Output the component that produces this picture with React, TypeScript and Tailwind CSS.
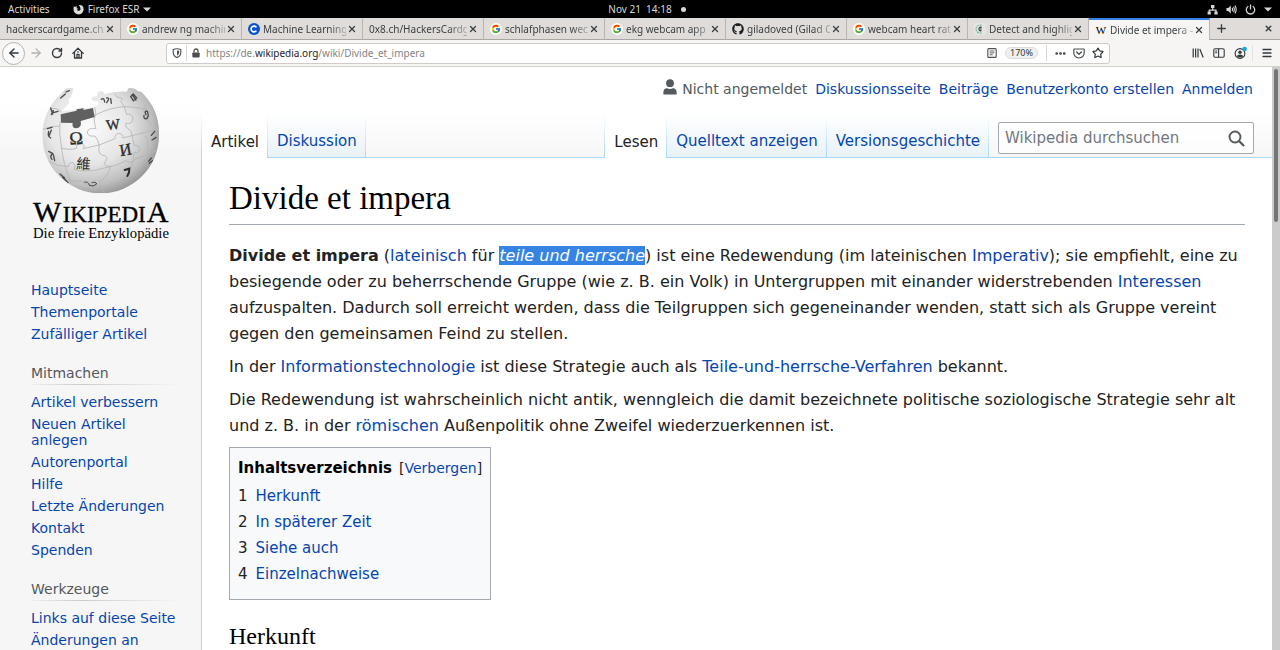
import React from "react";
import {
  ArrowLeft,
  ArrowRight,
  Ellipsis,
  Menu,
  Plus,
  RotateCw,
  Star,
  X,
} from "lucide-react";
import { FaGithub } from "react-icons/fa";
import { FcGoogle } from "react-icons/fc";

const link = "text-[#0645ad] hover:underline";

function PuzzleGlobe() {
  const glyph = { fontFamily: "Liberation Serif, serif", fill: "#2c2c2c" };
  return (
    <svg
      viewBox="90 54 426 480"
      className="h-[160px] w-[142px]"
      role="img"
      aria-label="Wikipedia – Die freie Enzyklopädie"
    >
      <defs>
        <radialGradient id="globe" cx="0.4" cy="0.38" r="0.66">
          <stop offset="0" stopColor="#fbfbfb" />
          <stop offset="0.5" stopColor="#e6e6e6" />
          <stop offset="0.8" stopColor="#bdbdbd" />
          <stop offset="1" stopColor="#868686" />
        </radialGradient>
        <clipPath id="globeClip">
          <path d="M197 69 Q209 62 220 68 L214 92 Q204 96 207 112 L186 136 L282 122 Q300 118 293 106 Q276 108 274 98 Q277 90 292 91 Q289 79 300 76 Q312 74 313 84 Q346 74 380 77 L386 66 Q404 64 412 74 L424 78 A172 172 0 0 1 477 208 A175 174 0 0 1 302 382 A175 174 0 0 1 127 208 A172 172 0 0 1 180 86 Z" />
        </clipPath>
      </defs>
      <g clipPath="url(#globeClip)">
        <rect x="120" y="56" width="365" height="335" fill="url(#globe)" />
        <g fill="none" stroke="#b4b4b4" strokeWidth="2.5">
          <path d="M180 165 Q176 200 184 240 Q190 300 214 352" />
          <path d="M282 155 Q284 180 288 188 Q266 184 262 198 Q262 213 285 210 Q295 222 298 240 Q292 262 308 268 Q330 270 314 290 Q312 304 332 300 Q326 330 300 346 Q296 356 314 380" />
          <path d="M345 84 Q348 96 360 94 Q372 98 362 106 Q376 120 380 146 Q396 140 399 158 Q396 176 378 172 Q372 182 392 194 Q400 220 402 238 Q418 236 420 252 Q414 264 402 260 Q400 300 376 340" />
          <path d="M182 246 Q215 254 230 246 Q226 232 244 232 Q256 236 250 248 Q300 240 345 218 Q344 204 356 202 Q372 204 368 216 Q420 204 474 188" />
          <path d="M128 190 Q150 180 180 180 M284 148 Q330 124 374 122 Q420 124 446 132 M284 122 Q290 140 284 156" />
          <path d="M146 286 Q175 302 205 302 Q206 288 220 290 Q230 300 222 310 Q265 322 312 306 Q352 300 376 284 Q400 296 404 280 Q440 268 468 254" />
          <path d="M180 332 Q210 350 242 344 Q262 362 310 360 Q350 350 380 334" />
          <path d="M150 130 Q168 122 184 138 M440 112 Q422 132 442 150 Q440 170 456 178 M436 210 Q450 236 438 262" />
        </g>
        <path
          d="M182 145 L230 134 Q226 120 241 119 Q255 121 250 132 L279 126 L284 153 L242 165 Q246 184 230 187 Q214 187 218 171 L183 170 Z"
          fill="#606060"
        />
        <g style={glyph}>
          <text x="208" y="235" fontSize="55" stroke="#2c2c2c" transform="rotate(-4 228 217)">Ω</text>
          <text x="318" y="190" fontSize="44" stroke="#2c2c2c" transform="rotate(-7 340 174)">W</text>
          <text x="358" y="268" fontSize="50" stroke="#2c2c2c" transform="rotate(-10 376 250)">И</text>
          <text
            x="229"
            y="309"
            fontSize="43"
            transform="rotate(4 250 294)"
            style={{ fontFamily: "Noto Sans CJK TC, sans-serif" }}
          >
            維
          </text>
        </g>
        <g fill="none" stroke="#4a4a4a" strokeWidth="4" strokeLinecap="round">
          <path d="M304 100 Q312 93 314 108 M320 96 Q332 94 320 110 M332 98 L334 112" />
          <path d="M374 312 L388 308 Q389 320 382 330" strokeWidth="6" stroke="#2c2c2c" />
          <path d="M432 148 Q430 160 440 158 Q448 150 442 136 Q432 134 438 146" />
          <path d="M392 92 L400 84 L410 96 L400 104 Z M396 86 L408 102" />
          <path d="M152 126 L158 144 M160 140 L174 136 M154 146 L160 134" />
          <path d="M142 188 L156 184 M146 196 Q142 210 152 216 M154 192 L148 208" />
          <path d="M146 256 L158 262 Q148 272 156 280 M160 266 L164 284" />
          <path d="M180 324 L194 336 M188 334 L204 350 M182 96 L196 84 M198 78 L208 74" />
          <path d="M254 348 Q266 346 268 358 Q280 364 290 354 Q288 346 276 350" strokeWidth="3" />
          <path d="M454 208 L464 196 M456 222 L468 214 M446 286 L454 276 M448 292 L458 284" />
        </g>
      </g>
      <g style={{ fontFamily: "Liberation Serif, serif" }} fill="#000" stroke="#000">
        <text x="99" y="467" fontSize="90" strokeWidth="1">
          W
        </text>
        <text x="188" y="467" fontSize="69" strokeWidth="1">
          IKIPEDI
        </text>
        <text x="440" y="467" fontSize="90" strokeWidth="1">
          A
        </text>
        <text x="99" y="515" fontSize="44" strokeWidth="0">
          Die freie Enzyklopädie
        </text>
      </g>
    </svg>
  );
}

function CourseraIcon() {
  return (
    <svg viewBox="0 0 12 12" className="size-3 shrink-0" aria-hidden="true">
      <circle cx="6" cy="6" r="6" fill="#0b53ce" />
      <path d="M8.4 7.6 A2.9 2.9 0 1 1 8.4 4.4" fill="none" stroke="#fff" strokeWidth="1.7" />
    </svg>
  );
}

function SpiralIcon() {
  return (
    <svg viewBox="0 0 12 12" className="size-3 shrink-0" aria-hidden="true">
      <rect width="12" height="12" rx="2" fill="#e6e4e2" />
      <path d="M7.6 2.4 A4 4 0 1 0 7.6 9.8" fill="none" stroke="#7dbba3" strokeWidth="1.2" strokeDasharray="2 0.6" />
      <path d="M7.6 4.5 A1.8 1.8 0 1 0 7.6 7.6 M6 6 H7.6" fill="none" stroke="#333" strokeWidth="1.1" />
    </svg>
  );
}

type Tab = { title: string; icon?: "google" | "coursera" | "github" | "spiral" | "wiki"; active?: boolean };

const tabs: Tab[] = [
  { title: "hackerscardgame.ch/" },
  { title: "andrew ng machin", icon: "google" },
  { title: "Machine Learning", icon: "coursera" },
  { title: "0x8.ch/HackersCardg" },
  { title: "schlafphasen weck", icon: "google" },
  { title: "ekg webcam app g", icon: "google" },
  { title: "giladoved (Gilad O", icon: "github" },
  { title: "webcam heart rate", icon: "google" },
  { title: "Detect and highlig", icon: "spiral" },
  { title: "Divide et impera –", icon: "wiki", active: true },
];

function TabIcon({ icon }: { icon: Tab["icon"] }) {
  if (icon === "google")
    return (
      <span className="flex size-3 shrink-0 items-center justify-center rounded-full bg-white">
        <FcGoogle className="size-[10px]" />
      </span>
    );
  if (icon === "coursera") return <CourseraIcon />;
  if (icon === "github") return <FaGithub className="size-3 shrink-0 text-[#1b1f23]" />;
  if (icon === "spiral") return <SpiralIcon />;
  if (icon === "wiki")
    return <span className="w-3 shrink-0 text-center font-['Liberation_Serif',serif] text-[11px] text-black">W</span>;
  return null;
}

function BrowserTab({ tab }: { tab: Tab }) {
  return (
    <div
      className={
        "flex min-w-0 flex-1 items-center border-r border-[#b9b5b1] pl-[6px] pr-1 " +
        (tab.active ? "border-t-2 border-t-[#3584e4] bg-[#f6f5f4] pb-px" : "border-b border-b-[#a9a5a1] bg-[#dfdcd9] pt-px")
      }
    >
      <div className="flex min-w-0 flex-1 items-center gap-[3px]">
        <TabIcon icon={tab.icon} />
        <span className="min-w-0 flex-1 overflow-hidden whitespace-nowrap [mask-image:linear-gradient(to_right,black_80%,#0004)]">
          {tab.title}
        </span>
      </div>
      <button type="button" aria-label={"Close " + tab.title} className="flex size-3 shrink-0 items-center justify-center">
        <X className="size-[10px]" strokeWidth={3} />
      </button>
    </div>
  );
}

function DesktopBar() {
  return (
    <div className="grid h-[18px] shrink-0 grid-cols-[1fr_auto_1fr] items-center bg-black px-2 font-['Noto_Sans',sans-serif] text-[10px] leading-4 text-[#d8d8d8]">
      <div className="flex items-center gap-[23px]">
        <button type="button">Activities</button>
        <button type="button" className="flex items-center gap-1">
          <svg viewBox="0 0 12 12" className="size-[11px]" aria-hidden="true">
            <path
              d="M1 2.4 Q1.6 3 2.4 3 Q3.4 2.4 4.6 2.8 Q3.6 3.6 4 4.6 L5.6 5.2 Q5.2 6.4 4 6.4 Q5.4 8 7.2 7.2 Q8.8 6 8 4 Q7.6 2.6 6.2 1.6 Q8 0.6 9.6 2 Q9.6 1.4 9.2 0.8 Q12 3 11.6 6.4 Q11 11 6.2 11.4 Q1.2 11.2 0.6 6.4 Q0.4 4 1 2.4Z"
              fill="#dcdcdc"
            />
          </svg>
          Firefox ESR
          <svg viewBox="0 0 8 5" className="h-[5px] w-2" aria-hidden="true">
            <path d="M0 0.5H8L4 4.5Z" fill="#d8d8d8" />
          </svg>
        </button>
      </div>
      <div className="flex items-center gap-[9px] pl-[14px]">
        <span className="whitespace-pre">Nov 21  14:18</span>
        <span className="size-[5px] rounded-full bg-[#d8d8d8]" />
      </div>
      <div className="flex items-center justify-end gap-2">
        <svg viewBox="0 0 11 11" className="size-[11px]" fill="#d8d8d8" aria-label="Network">
          <path d="M4 1h3.4v3H6.3v1.6H9.6V7.6H10.6V10.4H7.4V7.6H8.4V6.7H2.8V7.6H3.8V10.4H0.6V7.6H1.6V5.6H5.1V4H4Z" />
        </svg>
        <svg viewBox="0 0 12 12" className="size-[11px]" fill="none" stroke="#d8d8d8" strokeWidth="1.2" aria-label="Volume">
          <path d="M0.5 4.3H2.5L5.2 1.6V10.4L2.5 7.7H0.5Z" fill="#d8d8d8" stroke="none" />
          <path d="M6.6 4.2Q7.8 6 6.6 7.8M8.2 3Q10 6 8.2 9M9.8 1.8Q12.4 6 9.8 10.2" />
        </svg>
        <svg viewBox="0 0 12 12" className="size-[11px]" fill="none" stroke="#d8d8d8" strokeWidth="1.4" aria-label="Power">
          <path d="M3.6 2.4A4.6 4.6 0 1 0 8.4 2.4M6 0.6V6" />
        </svg>
        <svg viewBox="0 0 8 5" className="h-[5px] w-2" aria-hidden="true">
          <path d="M0 0.5H8L4 4.5Z" fill="#d8d8d8" />
        </svg>
      </div>
    </div>
  );
}

function TabStrip() {
  return (
    <div className="flex h-[22px] shrink-0 bg-[#dfdcd9] font-['Noto_Sans',sans-serif] text-[10px] leading-4 text-[#3a3f42]">
      {tabs.map((t) => (
        <BrowserTab key={t.title} tab={t} />
      ))}
      <div className="flex w-[70px] items-center justify-between border-b border-[#a9a5a1] pl-[5px] pr-[7px]">
        <button type="button" aria-label="New tab">
          <Plus className="size-[13px]" strokeWidth={2.5} />
        </button>
        <button type="button" aria-label="Close window">
          <X className="size-[9px]" strokeWidth={4} />
        </button>
      </div>
    </div>
  );
}

function NavBar() {
  return (
    <div className="flex h-[27px] shrink-0 items-center border-b border-[#d5d1cd] bg-[#f6f5f4] pl-[2px] pr-[7px] font-['Noto_Sans',sans-serif] text-[10px] text-[#33393b]">
      <button type="button" aria-label="Back" className="flex size-[23px] items-center justify-center rounded-full border border-[#b5b2af] bg-[#fbfafa]">
        <ArrowLeft className="size-[14px]" strokeWidth={2.4} />
      </button>
      <button type="button" aria-label="Forward" className="ml-1 text-[#b0b0b0]">
        <ArrowRight className="size-[14px]" strokeWidth={2.2} />
      </button>
      <button type="button" aria-label="Reload" className="ml-2">
        <RotateCw className="size-3" strokeWidth={2.8} />
      </button>
      <button type="button" aria-label="Home" className="ml-[9px]">
        <svg viewBox="0 0 12 12" className="size-3" fill="none" stroke="#33393b" strokeWidth="1.3" strokeLinejoin="round" strokeLinecap="round">
          <path d="M0.8 6.4L6 1.2L11.2 6.4M2.5 5.5V11H9.5V5.5M5 10.8V7.4H7V10.8M6 4.6V5.2" />
        </svg>
      </button>
      <div className="ml-[82px] mr-[82px] flex h-[21px] min-w-0 flex-1 items-center rounded-[3px] border border-[#cfcbc8] bg-white pl-[5px] pr-1">
        <svg viewBox="0 0 10 10" className="size-[10px] shrink-0" fill="none" stroke="#4c4f51" strokeWidth="1.1" aria-hidden="true">
          <path d="M1.2 1.4Q5 0 8.8 1.4V4.6Q8.6 8 5 9.5Q1.4 8 1.2 4.6Z" />
          <path d="M5 2.4Q6.4 2.4 7.2 2.8V4.6Q7 6.6 5 7.8Z" fill="#4c4f51" stroke="none" />
        </svg>
        <span className="ml-1 h-4 w-px bg-[#d5d5d5]" />
        <svg viewBox="0 0 10 10" className="ml-1 size-[10px] shrink-0" aria-hidden="true">
          <path d="M3 4.6V3A2 2 0 0 1 7 3V4.6" fill="none" stroke="#4c4f51" strokeWidth="1.3" />
          <rect x="1.3" y="4.4" width="7.4" height="5" rx="0.8" fill="#4c4f51" />
        </svg>
        <div className="ml-[5px] min-w-0 flex-1 whitespace-nowrap text-[#858585]" role="textbox" aria-label="Address">
          https://de.<span className="text-[#1f2426]">wikipedia.org</span>/wiki/Divide_et_impera
        </div>
        <button type="button" aria-label="Reader view">
          <svg viewBox="0 0 10 10" className="size-[10px]" fill="none" stroke="#4c4f51" strokeWidth="1.1">
            <rect x="0.8" y="0.6" width="8.4" height="8.8" rx="1" />
            <path d="M2.6 3H7.4M2.6 4.9H7.4M2.6 6.8H5.6" strokeWidth="0.9" />
          </svg>
        </button>
        <button type="button" className="ml-2 h-3 w-[33px] rounded-full border border-[#dcdcdc] bg-[#f0f0f0] text-[9px] leading-[10px]">
          170%
        </button>
        <span className="ml-2 h-4 w-px bg-[#d5d5d5]" />
        <button type="button" aria-label="Page actions" className="ml-[7px]">
          <Ellipsis className="size-[13px]" strokeWidth={3} />
        </button>
        <button type="button" aria-label="Save to Pocket" className="ml-[6px]">
          <svg viewBox="0 0 12 11" className="h-[11px] w-3" fill="none" stroke="#4c4f51" strokeWidth="1.2" strokeLinecap="round" strokeLinejoin="round">
            <path d="M1.4 1H10.6Q11.2 1 11.2 1.6V4.8Q11 9.6 6 10Q1 9.6 0.8 4.8V1.6Q0.8 1 1.4 1Z" />
            <path d="M3.6 4L6 6.3L8.4 4" strokeWidth="1.4" />
          </svg>
        </button>
        <button type="button" aria-label="Bookmark" className="ml-[7px] mr-px">
          <Star className="size-3" strokeWidth={2.4} />
        </button>
      </div>
      <div className="flex items-center">
        <button type="button" aria-label="Library">
          <svg viewBox="0 0 12 10" className="h-[10px] w-3" fill="none" stroke="#33393b" strokeWidth="1.2">
            <path d="M1.2 0.5V9.5M3.6 0.5V9.5M6 0.5V9.5M7.8 1L11.2 9.4" />
          </svg>
        </button>
        <button type="button" aria-label="Sidebars" className="ml-[9px]">
          <svg viewBox="0 0 12 10" className="h-[10px] w-3" fill="none" stroke="#33393b" strokeWidth="1.1">
            <rect x="0.8" y="0.8" width="10.4" height="8.4" rx="1.2" />
            <path d="M5.6 0.8V9.2M2.2 3H4.2M2.2 4.8H4.2" />
          </svg>
        </button>
        <button type="button" aria-label="Account" className="ml-2">
          <svg viewBox="0 0 15 14" className="h-[14px] w-[15px]">
            <circle cx="7" cy="7.5" r="4.9" fill="none" stroke="#33393b" strokeWidth="1.1" />
            <circle cx="7" cy="6.2" r="1.7" fill="#33393b" />
            <path d="M3.8 10.2Q4.4 8.4 7 8.4Q9.6 8.4 10.2 10.2Q7 12.8 3.8 10.2Z" fill="#33393b" />
            <circle cx="11.6" cy="3" r="2.3" fill="#1ca4e8" />
          </svg>
        </button>
        <span className="ml-1 h-4 w-px bg-[#e4e1de]" />
        <button type="button" aria-label="Menu" className="ml-2">
          <Menu className="size-3" strokeWidth={2.6} />
        </button>
      </div>
    </div>
  );
}

function FadeLine() {
  return <span className="w-px shrink-0 self-stretch bg-linear-to-b from-white to-[#a7d7f9]" />;
}

function PageTab({ label, active }: { label: string; active?: boolean }) {
  return (
    <a
      href="#"
      className={
        "flex items-center whitespace-nowrap pl-[9px] pr-2 pt-[11px] " +
        (active ? "bg-white text-[#222]" : "border-b border-[#a7d7f9] bg-linear-to-b from-white to-[#e8f2f8] text-[#0645ad]")
      }
    >
      {label}
    </a>
  );
}

function PageHeader() {
  return (
    <header className="flex h-[91px] shrink-0 flex-col justify-between bg-linear-to-b from-white from-50% to-[#f6f6f6]">
      <nav aria-label="Benutzer" className="flex items-center justify-end gap-2 pr-[19px] pt-3 text-[14px] leading-5">
        <span className="flex items-center gap-[5px] text-[#54595d]">
          <svg viewBox="0 0 14 16" className="mb-1 h-4 w-[14px]" fill="#54595d" aria-hidden="true">
            <circle cx="7" cy="4.2" r="3.9" />
            <path d="M0.4 15.4V13Q0.6 9.4 4 9.2Q7 10.6 10 9.2Q13.4 9.4 13.6 13V15.4Z" />
          </svg>
          Nicht angemeldet
        </span>
        <a href="#" className={link}>Diskussionsseite</a>
        <a href="#" className={link}>Beiträge</a>
        <a href="#" className={link}>Benutzerkonto erstellen</a>
        <a href="#" className={link}>Anmelden</a>
      </nav>
      <div className="flex h-11 text-[15px] leading-5">
        <FadeLine />
        <PageTab label="Artikel" active />
        <FadeLine />
        <PageTab label="Diskussion" />
        <FadeLine />
        <div className="flex-1 border-b border-[#a7d7f9]" />
        <FadeLine />
        <PageTab label="Lesen" active />
        <FadeLine />
        <PageTab label="Quelltext anzeigen" />
        <FadeLine />
        <PageTab label="Versionsgeschichte" />
        <FadeLine />
        <form className="flex border-b border-[#a7d7f9] pb-[3px] pl-[9px] pr-[18px] pt-2">
          <div className="flex w-[256px] items-center rounded-[2px] border border-[#a2a9b1] bg-white/70 pl-[6px] pr-2">
            <input
              type="search"
              aria-label="Wikipedia durchsuchen"
              placeholder="Wikipedia durchsuchen"
              className="min-w-0 flex-1 bg-transparent outline-none placeholder:text-[#72777d]"
            />
            <button type="button" aria-label="Suchen">
              <svg viewBox="0 0 18 18" className="size-[17px]" fill="none" stroke="#54595d" strokeWidth="2">
                <circle cx="7.4" cy="7.4" r="5.8" />
                <path d="M11.6 11.6L17 17" strokeWidth="2.4" />
              </svg>
            </button>
          </div>
        </form>
      </div>
    </header>
  );
}

const portals = [
  { title: "", items: ["Hauptseite", "Themenportale", "Zufälliger Artikel"] },
  {
    title: "Mitmachen",
    items: ["Artikel verbessern", "Neuen Artikel anlegen", "Autorenportal", "Hilfe", "Letzte Änderungen", "Kontakt", "Spenden"],
  },
  { title: "Werkzeuge", items: ["Links auf diese Seite", "Änderungen an verlinkten Seiten"] },
];

function Sidebar() {
  return (
    <aside className="w-[201px] shrink-0 bg-[#f6f6f6]">
      <div className="bg-linear-to-b from-white from-20% via-[#f6f6f6] via-50% to-[#f6f6f6]">
        <a href="#" className="flex pl-[30px] pt-[17px]">
          <PuzzleGlobe />
        </a>
      </div>
      <div className="flex flex-col gap-3 pl-[31px] pr-5 pt-[38px] text-[14px] leading-4">
        {portals.map((p) => (
          <nav key={p.title} aria-label={p.title || "Navigation"}>
            {p.title && (
              <>
                <h3 className="pb-[3px] pt-[5px] text-[#54595d]">{p.title}</h3>
                <div className="mb-[9px] h-px bg-linear-to-r from-[#f0f0f0] via-[#c8ccd1] via-33% to-[#f6f6f6]" />
              </>
            )}
            <ul>
              {p.items.map((i) => (
                <li key={i} className="max-w-[145px] pb-[6px]">
                  <a href="#" className={link}>{i}</a>
                </li>
              ))}
            </ul>
          </nav>
        ))}
      </div>
    </aside>
  );
}

const sections = ["Herkunft", "In späterer Zeit", "Siehe auch", "Einzelnachweise"];

function Article() {
  return (
    <main className="flex-1 border-l border-[#a7d7f9] bg-white px-[27px] pt-5 text-[16px] leading-[26px] text-[#222]">
      <h1 className="border-b border-[#a2a9b1] pb-[6px] font-['Liberation_Serif',serif] text-[33px] leading-10 text-black">
        Divide et impera
      </h1>
      <div className="flex flex-col gap-[7px] pt-[18px]">
        <p>
          <b>Divide et impera</b> (<a href="#" className={link}>lateinisch</a> für{" "}
          <i className="bg-[#3584e4] text-white">teile und herrsche</i>) ist eine Redewendung (im lateinischen{" "}
          <a href="#" className={link}>Imperativ</a>); sie empfiehlt, eine zu besiegende oder zu beherrschende Gruppe
          (wie z.&nbsp;B. ein Volk) in Untergruppen mit einander widerstrebenden{" "}
          <a href="#" className={link}>Interessen</a> aufzuspalten. Dadurch soll erreicht werden, dass die Teilgruppen
          sich gegeneinander wenden, statt sich als Gruppe vereint gegen den gemeinsamen Feind zu stellen.
        </p>
        <p>
          In der <a href="#" className={link}>Informationstechnologie</a> ist diese Strategie auch als{" "}
          <a href="#" className={link}>Teile-und-herrsche-Verfahren</a> bekannt.
        </p>
        <p>
          Die Redewendung ist wahrscheinlich nicht antik, wenngleich die damit bezeichnete politische soziologische
          Strategie sehr alt und z.&nbsp;B. in der <a href="#" className={link}>römischen</a> Außenpolitik ohne Zweifel
          wiederzuerkennen ist.
        </p>
      </div>
      <nav
        aria-labelledby="toc-title"
        className="mt-2 w-fit border border-[#a2a9b1] bg-[#f8f9fa] px-2 pb-3 pt-[7px] text-[15px]"
      >
        <div className="flex items-center gap-[7px]">
          <h2 id="toc-title" className="font-bold text-black">Inhaltsverzeichnis</h2>
          <span className="text-[14px]">
            [<button type="button" className={link}>Verbergen</button>]
          </span>
        </div>
        <ul className="pt-[2px]">
          {sections.map((s, n) => (
            <li key={s}>
              <a href="#" className="flex gap-2 text-[#0645ad]">
                <span className="text-[#222]">{n + 1}</span>
                {s}
              </a>
            </li>
          ))}
        </ul>
      </nav>
      <h2 className="mt-5 border-b border-[#a2a9b1] font-['Liberation_Serif',serif] text-[24px] leading-8 text-black">
        Herkunft
      </h2>
    </main>
  );
}

export default function App() {
  return (
    <div className="flex h-screen flex-col overflow-hidden bg-white">
      <DesktopBar />
      <TabStrip />
      <NavBar />
      <div className="flex min-h-0 flex-1 font-['DejaVu_Sans',sans-serif]">
        <div className="flex min-w-0 flex-1 overflow-hidden">
          <Sidebar />
          <div className="flex min-w-0 flex-1 flex-col">
            <PageHeader />
            <Article />
          </div>
        </div>
        <div className="w-2 shrink-0 bg-[#cbcbcb] px-[2px] pt-[2px]">
          <div className="h-[153px] rounded-full bg-[#757575]" />
        </div>
      </div>
    </div>
  );
}
